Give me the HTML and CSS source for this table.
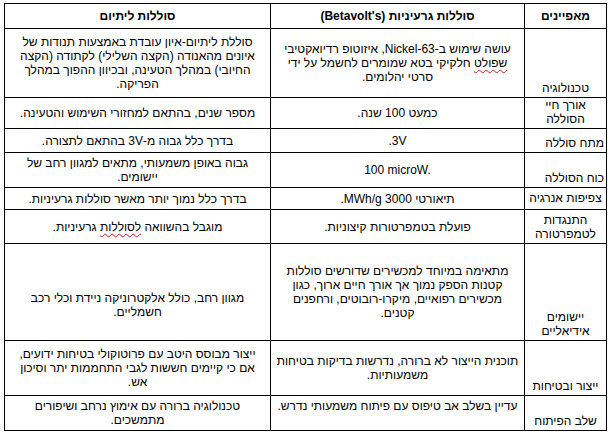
FILE: index.html
```html
<!DOCTYPE html>
<html lang="he" dir="rtl">
<head>
<meta charset="utf-8">
<title>השוואת סוללות</title>
<link rel="stylesheet" href="styles.css">
</head>
<body>
<table class="cmp">
  <colgroup>
    <col class="c-feat">
    <col class="c-beta">
    <col class="c-li">
  </colgroup>
  <thead>
    <tr class="r-head">
      <th class="feat">מאפיינים</th>
      <th>סוללות גרעיניות (Betavolt's)</th>
      <th>סוללות ליתיום</th>
    </tr>
  </thead>
  <tbody>
    <tr class="r-tech">
      <td class="feat">טכנולוגיה</td>
      <td>עושה שימוש ב-Nickel-63, איזוטופ רדיואקטיבי <span class="spell">שפולט</span> חלקיקי בטא שמומרים לחשמל על ידי סרטי יהלומים.</td>
      <td>סוללת ליתיום-איון עובדת באמצעות תנודות של איונים מהאנודה (הקצה השלילי) לקתודה (הקצה החיובי) במהלך הטעינה, ובכיוון ההפוך במהלך הפריקה.</td>
    </tr>
    <tr class="r-life">
      <td class="feat">אורך חיי הסוללה</td>
      <td>כמעט 100 שנה.</td>
      <td>מספר שנים, בהתאם למחזורי השימוש והטעינה.</td>
    </tr>
    <tr class="r-volt">
      <td class="feat end">מתח סוללה</td>
      <td>3V.</td>
      <td>בדרך כלל גבוה מ-3V בהתאם לתצורה.</td>
    </tr>
    <tr class="r-power">
      <td class="feat end">כוח הסוללה</td>
      <td><span dir="ltr">100 microW.</span></td>
      <td>גבוה באופן משמעותי, מתאים למגוון רחב של יישומים.</td>
    </tr>
    <tr class="r-energy">
      <td class="feat tight">צפיפות אנרגיה</td>
      <td>תיאורטי 3000 MWh/g.</td>
      <td>בדרך כלל נמוך יותר מאשר סוללות גרעיניות.</td>
    </tr>
    <tr class="r-temp">
      <td class="feat">התנגדות לטמפרטורה</td>
      <td>פועלת בטמפרטורות קיצוניות.</td>
      <td>מוגבל בהשוואה <span class="spell">לסוללות</span> גרעיניות.</td>
    </tr>
    <tr class="r-apps">
      <td class="feat">יישומים אידיאליים</td>
      <td>מתאימה במיוחד למכשירים שדורשים סוללות קטנות הספק נמוך אך אורך חיים ארוך, כגון מכשירים רפואיים, מיקרו-רובוטים, ורחפנים קטנים.</td>
      <td class="low">מגוון רחב, כולל אלקטרוניקה ניידת וכלי רכב חשמליים.</td>
    </tr>
    <tr class="r-prod">
      <td class="feat">ייצור ובטיחות</td>
      <td>תוכנית הייצור לא ברורה, נדרשות בדיקות בטיחות משמעותיות.</td>
      <td>ייצור מבוסס היטב עם פרוטוקולי בטיחות ידועים, אם כי קיימים חששות לגבי התחממות יתר וסיכון אש.</td>
    </tr>
    <tr class="r-dev">
      <td class="feat">שלב הפיתוח</td>
      <td class="top">עדיין בשלב אב טיפוס עם פיתוח משמעותי נדרש.</td>
      <td>טכנולוגיה ברורה עם אימוץ נרחב ושיפורים מתמשכים.</td>
    </tr>
  </tbody>
</table>
</body>
</html>
```
FILE: styles.css
```css
html, body {
  margin: 0;
  padding: 0;
  background: #ffffff;
}
body {
  padding: 3px;
  font-family: "Liberation Sans", Arial, sans-serif;
  font-size: 12px;
  color: #000000;
}
.cmp {
  border-collapse: collapse;
  width: 602px;
  table-layout: fixed;
}
.c-feat { width: 82px; }
.c-beta { width: 254px; }
.c-li { width: 266px; }
.cmp th,
.cmp td {
  border: 1px solid #000000;
  padding: 0 5px;
  line-height: 14px;
  text-align: center;
  vertical-align: middle;
  font-weight: normal;
}
.cmp th {
  font-weight: bold;
}
.cmp td.feat {
  padding: 0 2px 2px;
  text-align: center;
  vertical-align: bottom;
}
.cmp td.feat.end {
  text-align: right;
}
.cmp td.feat.tight {
  padding: 0 0 2px;
  white-space: nowrap;
  vertical-align: middle;
}
.spell {
  text-decoration: underline wavy #d02020;
  text-decoration-thickness: 1px;
  text-underline-offset: 2px;
}
.cmp td.low {
  padding-top: 26px;
}
.cmp td.top {
  vertical-align: top;
  padding-top: 3px;
}
.r-head { height: 25px; }
.r-tech { height: 69px; }
.r-life { height: 31px; }
.r-volt { height: 24px; }
.r-power { height: 35px; }
.r-energy { height: 22px; }
.r-temp { height: 34px; }
.r-apps { height: 97px; }
.r-prod { height: 55px; }
.r-dev { height: 35px; }
```
